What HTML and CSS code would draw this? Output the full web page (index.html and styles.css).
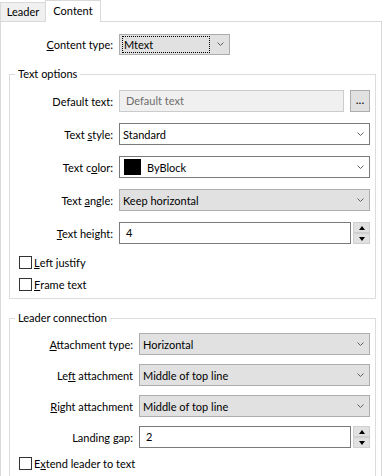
FILE: index.html
```html
<!DOCTYPE html>
<html lang="en">
<head>
    <meta charset="UTF-8">
    <title>Leader properties</title>
    <link rel="stylesheet" href="styles.css">
</head>
<body>
    <div class="tabs">
        <div class="tab">Leader</div>
        <div class="tab active">Content</div>
    </div>

    <div class="panel">
        <div class="row top">
            <label class="lbl"><u>C</u>ontent type:</label>
            <div class="combo list fixed">
                <span class="focus">Mtext</span>
                <svg class="chev" width="7" height="4" viewBox="0 0 7 4"><path d="M0.5 0.5 L3.5 3.5 L6.5 0.5"/></svg>
            </div>
        </div>

        <fieldset class="group">
            <legend>Text options</legend>
            <div class="row">
                <label class="lbl">Default text:</label>
                <div class="field disabled">Default text</div>
                <button class="dots">...</button>
            </div>
            <div class="row">
                <label class="lbl">Text <u>s</u>tyle:</label>
                <div class="combo">
                    <span class="value">Standard</span>
                    <svg class="chev" width="7" height="4" viewBox="0 0 7 4"><path d="M0.5 0.5 L3.5 3.5 L6.5 0.5"/></svg>
                </div>
            </div>
            <div class="row">
                <label class="lbl">Text c<u>o</u>lor:</label>
                <div class="combo">
                    <span class="swatch"></span>
                    <span class="value">ByBlock</span>
                    <svg class="chev" width="7" height="4" viewBox="0 0 7 4"><path d="M0.5 0.5 L3.5 3.5 L6.5 0.5"/></svg>
                </div>
            </div>
            <div class="row">
                <label class="lbl">Text <u>a</u>ngle:</label>
                <div class="combo list">
                    <span class="value">Keep horizontal</span>
                    <svg class="chev" width="7" height="4" viewBox="0 0 7 4"><path d="M0.5 0.5 L3.5 3.5 L6.5 0.5"/></svg>
                </div>
            </div>
            <div class="row">
                <label class="lbl"><u>T</u>ext height:</label>
                <div class="field">4</div>
                <div class="spin">
                    <span class="spin-btn"><i class="up"></i></span>
                    <span class="spin-btn"><i class="down"></i></span>
                </div>
            </div>
            <div class="check first"><span class="box"></span><u>L</u>eft justify</div>
            <div class="check"><span class="box"></span><u>F</u>rame text</div>
        </fieldset>

        <fieldset class="group leader">
            <legend>Leader connection</legend>
            <div class="row">
                <label class="lbl"><u>A</u>ttachment type:</label>
                <div class="combo list">
                    <span class="value">Horizontal</span>
                    <svg class="chev" width="7" height="4" viewBox="0 0 7 4"><path d="M0.5 0.5 L3.5 3.5 L6.5 0.5"/></svg>
                </div>
            </div>
            <div class="row">
                <label class="lbl">Le<u>f</u>t attachment</label>
                <div class="combo list">
                    <span class="value">Middle of top line</span>
                    <svg class="chev" width="7" height="4" viewBox="0 0 7 4"><path d="M0.5 0.5 L3.5 3.5 L6.5 0.5"/></svg>
                </div>
            </div>
            <div class="row">
                <label class="lbl"><u>R</u>ight attachment</label>
                <div class="combo list">
                    <span class="value">Middle of top line</span>
                    <svg class="chev" width="7" height="4" viewBox="0 0 7 4"><path d="M0.5 0.5 L3.5 3.5 L6.5 0.5"/></svg>
                </div>
            </div>
            <div class="row">
                <label class="lbl">Landing <u>g</u>ap:</label>
                <div class="field">2</div>
                <div class="spin">
                    <span class="spin-btn"><i class="up"></i></span>
                    <span class="spin-btn"><i class="down"></i></span>
                </div>
            </div>
            <div class="check first"><span class="box"></span>E<u>x</u>tend leader to text</div>
        </fieldset>
    </div>
</body>
</html>
```

FILE: styles.css
```css
body {
    margin: 0;
    width: 383px;
    height: 476px;
    overflow: hidden;
    background: #fff;
    color: #000;
    font-family: "Segoe UI", Lato, sans-serif;
    font-size: 11px;
}

u {
    text-decoration: underline;
    text-underline-offset: 1px;
}

/* tab strip */
.tabs {
    display: flex;
    align-items: flex-end;
    height: 21px;
}

.tab {
    box-sizing: border-box;
    width: 46px;
    height: 19px;
    line-height: 18px;
    text-align: center;
    border: 1px solid #d9d9d9;
    border-bottom: none;
    background: #f0f0f0;
}

.tab.active {
    position: relative;
    z-index: 1;
    width: 56px;
    height: 22px;
    line-height: 19px;
    margin-left: -1px;
    margin-bottom: -1px;
    background: #fff;
}

.panel {
    box-sizing: border-box;
    width: 382px;
    height: 455px;
    border: 1px solid #d9d9d9;
    border-bottom: none;
    padding-top: 11px;
}

/* rows */
.row {
    display: flex;
    align-items: center;
    height: 22px;
}

.group .row + .row {
    margin-top: 11px;
}

.group.leader .row + .row {
    margin-top: 9px;
}

.lbl {
    flex: none;
    width: 103px;
    margin-right: 6px;
    text-align: right;
    white-space: nowrap;
}

.top .lbl {
    width: 112px;
}

.leader .lbl {
    width: 123px;
}

/* group boxes */
.group {
    margin: 11px 5px 0 8px;
    padding: 8px 5px 6px 0;
    border: 1px solid #dcdcdc;
    min-width: 0;
}

.group.leader {
    padding-top: 7px;
}

.group legend {
    margin-left: 5px;
    padding: 0 3px;
    line-height: 16px;
}

/* combo boxes */
.combo {
    box-sizing: border-box;
    flex: 1;
    display: flex;
    align-items: center;
    height: 22px;
    padding: 0 5px 0 3px;
    border: 1px solid #7a7a7a;
    background: #fff;
}

.combo.list {
    border-color: #adadad;
    background: #e1e1e1;
}

.combo.fixed {
    flex: none;
    width: 111px;
    height: 21px;
    padding-left: 2px;
}

.combo .value {
    flex: 1;
    white-space: nowrap;
}

.focus {
    box-sizing: border-box;
    width: 88px;
    height: 17px;
    line-height: 15px;
    padding-left: 1px;
    border: 1px dotted #000;
    margin-right: auto;
}

.chev {
    flex: none;
    fill: none;
    stroke: #606060;
    stroke-width: 1;
}

.swatch {
    flex: none;
    width: 17px;
    height: 16px;
    margin: 0 6px 0 1px;
    background: #000;
}

/* edit fields */
.field {
    box-sizing: border-box;
    flex: 1;
    height: 22px;
    line-height: 20px;
    padding-left: 6px;
    border: 1px solid #7a7a7a;
    background: #fff;
}

.field.disabled {
    border-color: #cccccc;
    background: #f0f0f0;
    color: #6d6d6d;
}

.dots {
    box-sizing: border-box;
    flex: none;
    width: 20px;
    height: 22px;
    margin-left: 6px;
    padding: 0 0 3px;
    border: 1px solid #adadad;
    background: #e1e1e1;
    font-family: inherit;
    font-size: 12px;
    line-height: 14px;
    color: #000;
}

/* spinner */
.spin {
    flex: none;
    display: flex;
    flex-direction: column;
    width: 17px;
    height: 22px;
    margin-left: 2px;
}

.spin-btn {
    box-sizing: border-box;
    display: flex;
    align-items: center;
    justify-content: center;
    height: 11px;
    border: 1px solid #cfcfcf;
    background: #e1e1e1;
}

.spin-btn .up,
.spin-btn .down {
    width: 0;
    height: 0;
    border-left: 3px solid transparent;
    border-right: 3px solid transparent;
}

.spin-btn .up {
    border-bottom: 4px solid #000;
}

.spin-btn .down {
    border-top: 4px solid #000;
}

/* check boxes */
.check {
    display: flex;
    align-items: center;
    height: 16px;
    padding-left: 9px;
    margin-top: 6px;
    white-space: nowrap;
}

.check.first {
    margin-top: 10px;
}

.group.leader .check.first {
    margin-top: 7px;
}

.box {
    box-sizing: border-box;
    flex: none;
    width: 13px;
    height: 13px;
    margin-right: 2px;
    border: 1px solid #333;
    background: #fff;
}
```
